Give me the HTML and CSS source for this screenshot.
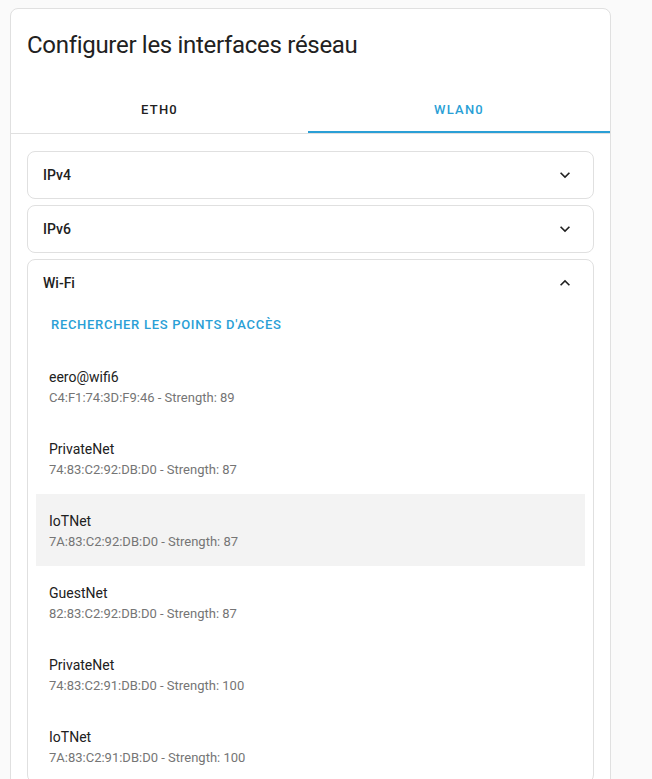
FILE: index.html
```html
<!DOCTYPE html>
<html lang="fr">
<head>
    <meta charset="UTF-8">
    <meta name="viewport" content="width=device-width, initial-scale=1.0">
    <title>Configurer les interfaces réseau</title>
    <link rel="stylesheet" href="styles.css">
</head>
<body>
    <div class="card">
        <h1 class="card-title">Configurer les interfaces réseau</h1>

        <div class="tabs">
            <div class="tab">ETH0</div>
            <div class="tab active">WLAN0</div>
        </div>

        <div class="card-content">
            <div class="panel">
                <div class="panel-header">
                    <span>IPv4</span>
                    <svg class="chevron" viewBox="0 0 24 24"><path d="M7.41,8.58L12,13.17L16.59,8.58L18,10L12,16L6,10L7.41,8.58Z"/></svg>
                </div>
            </div>
            <div class="panel">
                <div class="panel-header">
                    <span>IPv6</span>
                    <svg class="chevron" viewBox="0 0 24 24"><path d="M7.41,8.58L12,13.17L16.59,8.58L18,10L12,16L6,10L7.41,8.58Z"/></svg>
                </div>
            </div>
            <div class="panel">
                <div class="panel-header">
                    <span>Wi-Fi</span>
                    <svg class="chevron" viewBox="0 0 24 24"><path d="M7.41,15.41L12,10.83L16.59,15.41L18,14L12,8L6,14L7.41,15.41Z"/></svg>
                </div>
                <div class="panel-content">
                    <button class="text-button">Rechercher les points d'accès</button>
                    <div class="ap-list">
                        <div class="ap-item">
                            <span class="ap-name">eero@wifi6</span>
                            <span class="ap-info">C4:F1:74:3D:F9:46 - Strength: 89</span>
                        </div>
                        <div class="ap-item">
                            <span class="ap-name">PrivateNet</span>
                            <span class="ap-info">74:83:C2:92:DB:D0 - Strength: 87</span>
                        </div>
                        <div class="ap-item hover">
                            <span class="ap-name">IoTNet</span>
                            <span class="ap-info">7A:83:C2:92:DB:D0 - Strength: 87</span>
                        </div>
                        <div class="ap-item">
                            <span class="ap-name">GuestNet</span>
                            <span class="ap-info">82:83:C2:92:DB:D0 - Strength: 87</span>
                        </div>
                        <div class="ap-item">
                            <span class="ap-name">PrivateNet</span>
                            <span class="ap-info">74:83:C2:91:DB:D0 - Strength: 100</span>
                        </div>
                        <div class="ap-item">
                            <span class="ap-name">IoTNet</span>
                            <span class="ap-info">7A:83:C2:91:DB:D0 - Strength: 100</span>
                        </div>
                    </div>
                </div>
            </div>
        </div>
    </div>
</body>
</html>
```

FILE: styles.css
```css
body {
    margin: 0;
    background: #fafafa;
    font-family: Roboto, "Noto Sans", sans-serif;
    color: #212121;
    height: 779px;
    overflow: hidden;
}
.card {
    margin: 8px 0 0 10px;
    width: 599px;
    background: white;
    border: 1px solid #e0e0e0;
    border-radius: 8px;
}
.card-title {
    margin: 0;
    padding: 20px 16px 0;
    font-size: 24px;
    font-weight: 400;
    line-height: 32px;
    letter-spacing: -0.3px;
    color: #212121;
}
.tabs {
    display: grid;
    grid-template-columns: 297px 1fr;
    margin-top: 24px;
    border-bottom: 1px solid #e0e0e0;
}
.tab {
    height: 48px;
    display: flex;
    align-items: center;
    justify-content: center;
    font-size: 13px;
    font-weight: 500;
    letter-spacing: 1.2px;
    color: #212121;
    box-sizing: border-box;
}
.tab.active {
    color: #2a9fd6;
    border-bottom: 2px solid #2a9fd6;
    padding-top: 2px;
}
.card-content {
    padding: 17px 16px 0;
}
.panel {
    border: 1px solid #e0e0e0;
    border-radius: 8px;
    margin-bottom: 6px;
}
.panel-header {
    height: 46px;
    display: flex;
    align-items: center;
    justify-content: space-between;
    padding: 0 18px 0 15px;
    font-size: 14px;
    font-weight: 500;
}
.chevron {
    width: 20px;
    height: 20px;
    fill: #212121;
}
.panel-content {
    padding: 0 8px;
}
.text-button {
    display: block;
    height: 36px;
    margin: 0 0 0 8px;
    padding: 0 7px;
    border: none;
    background: none;
    font-family: inherit;
    font-size: 13px;
    font-weight: 500;
    letter-spacing: 0.7px;
    text-transform: uppercase;
    color: #2a9fd6;
}
.ap-list {
    padding-top: 8px;
}
.ap-item {
    height: 72px;
    box-sizing: border-box;
    padding: 17px 13px 0;
    display: flex;
    flex-direction: column;
}
.ap-item.hover {
    background: #f3f3f3;
}
.ap-name {
    font-size: 14px;
    line-height: 20px;
    color: #212121;
}
.ap-info {
    margin-top: 1px;
    font-size: 13px;
    line-height: 20px;
    color: #757575;
}
```
